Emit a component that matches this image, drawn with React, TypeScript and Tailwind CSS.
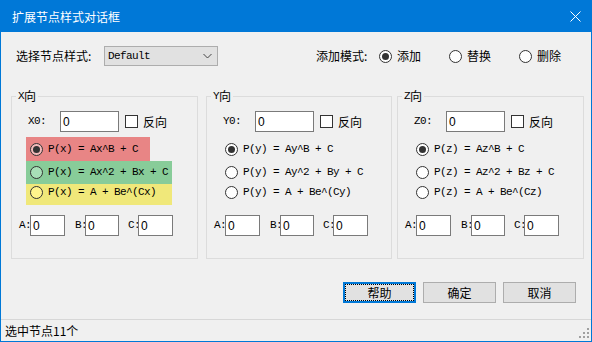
import React from "react";

function Radio({ checked, fill }: { checked?: boolean; fill?: string }) {
  return (
    <span
      className={`flex h-[13px] w-[13px] shrink-0 items-center justify-center rounded-full border border-[#333333] ${fill ?? "bg-white"}`}
    >
      {checked && <span className="h-[7px] w-[7px] rounded-full bg-[#333333]" />}
    </span>
  );
}

function TextBox({ w }: { w: string }) {
  return (
    <div
      className={`${w} flex h-[21px] items-center border border-[#7a7a7a] bg-white pl-[2px] font-['Liberation_Sans',sans-serif] text-[12px] leading-none text-black`}
    >
      0
    </div>
  );
}

type RowDef = { text: string; checked?: boolean; bg: string; fill: string; w: string; h: string; pt: string };

function Group({ axis, box, colored }: { axis: string; box: string; colored?: boolean }) {
  const a = axis.toLowerCase();
  const rows: RowDef[] = [
    {
      text: `P(${a}) = A${a}^B + C`,
      checked: true,
      bg: colored ? "bg-[#e88585]" : "",
      fill: colored ? "bg-[#f3b9b9]" : "bg-white",
      w: "w-[124px]",
      h: "h-[24px]",
      pt: "pt-[6px]",
    },
    {
      text: `P(${a}) = A${a}^2 + B${a} + C`,
      bg: colored ? "bg-[#88cc99]" : "",
      fill: colored ? "bg-[#a8dfb7]" : "bg-white",
      w: "w-[146px]",
      h: "h-[23px]",
      pt: "pt-[5px]",
    },
    {
      text: `P(${a}) = A + Be^(C${a})`,
      bg: colored ? "bg-[#f0e87a]" : "",
      fill: colored ? "bg-[#fff48c]" : "bg-white",
      w: "w-[146px]",
      h: "h-[21px]",
      pt: "pt-[2px]",
    },
  ];
  return (
    <div className={`relative h-[163px] shrink-0 border border-[#dcdcdc] ${box}`}>
      <div className="absolute left-[4px] top-[-9px] flex items-center bg-[#f0f0f0] px-[2px] text-[12px] leading-[16px] text-black">
        <span className="font-['Liberation_Mono',monospace] text-[11px] tracking-[-0.6px]">{axis}</span>
        <span className="font-['Noto_Sans_CJK_SC',sans-serif]">向</span>
      </div>
      <div className="mt-[14px] flex h-[21px] items-center pl-[16px]">
        <span className="w-[32px] font-['Liberation_Mono',monospace] text-[11px] tracking-[-0.6px] text-black">{axis}0:</span>
        <TextBox w="w-[59px]" />
        <span className="ml-[6px] h-[13px] w-[13px] border border-[#333333] bg-white" />
        <span className="ml-[5px] font-['Noto_Sans_CJK_SC',sans-serif] text-[12px] leading-[16px] text-black">反向</span>
      </div>
      <div className="mt-[5px] flex flex-col pl-[14px]">
        {rows.map((r) => (
          <div key={r.text} className={`flex items-start ${r.w} ${r.h} ${r.pt} ${r.bg} pl-[4px]`}>
            <Radio checked={r.checked} fill={r.fill} />
            <span className="ml-[5px] whitespace-pre font-['Liberation_Mono',monospace] text-[11px] leading-[13px] tracking-[-0.6px] text-black">
              {r.text}
            </span>
          </div>
        ))}
      </div>
      <div className="mt-[10px] flex h-[21px] items-center pl-[7px] font-['Liberation_Mono',monospace] text-[11px] tracking-[-0.6px] text-black">
        <span className="w-[11px]">A:</span>
        <TextBox w="w-[35px]" />
        <span className="ml-[10px] w-[10px]">B:</span>
        <TextBox w="w-[34px]" />
        <span className="ml-[9px] w-[10px]">C:</span>
        <TextBox w="w-[35px]" />
      </div>
    </div>
  );
}

function Btn({ label, focus }: { label: string; focus?: boolean }) {
  if (focus) {
    return (
      <div className="flex h-[21px] w-[73px] border-2 border-[#0078d7] bg-[#e1e1e1]">
        <div className="flex flex-1 items-center justify-center border border-dotted border-black font-['Noto_Sans_CJK_SC',sans-serif] text-[12px] leading-none text-black">
          {label}
        </div>
      </div>
    );
  }
  return (
    <div className="flex h-[21px] w-[73px] items-center justify-center border border-[#adadad] bg-[#e1e1e1] font-['Noto_Sans_CJK_SC',sans-serif] text-[12px] leading-none text-black">
      {label}
    </div>
  );
}

function ModeRadio({ label, checked }: { label: string; checked?: boolean }) {
  return (
    <div className="flex w-[70px] items-center">
      <Radio checked={checked} />
      <span className="ml-[5px]">{label}</span>
    </div>
  );
}

export default function App() {
  return (
    <div className="flex h-[342px] w-[592px] flex-col border border-[#0078d7] bg-[#f0f0f0] font-['Noto_Sans_CJK_SC',sans-serif] text-[12px] text-black">
      <div className="flex h-[31px] shrink-0 items-center justify-between bg-[#0078d7] pl-[11px] pr-[11px] text-white">
        <span className="leading-[16px]">扩展节点样式对话框</span>
        <svg width="11" height="11" viewBox="0 0 11 11" className="mr-[-1px]">
          <path d="M0.5 0.5 L10.5 10.5 M10.5 0.5 L0.5 10.5" stroke="white" strokeWidth="1" />
        </svg>
      </div>

      <div className="mt-[14px] flex h-[20px] shrink-0 items-center pl-[15px]">
        <span className="w-[88px] leading-[16px]">选择节点样式:</span>
        <div className="flex h-[20px] w-[114px] items-center justify-between border border-[#adadad] bg-[#e1e1e1] pl-[3px] pr-[5px]">
          <span className="font-['Liberation_Mono',monospace] text-[11px] tracking-[-0.6px]">Default</span>
          <svg width="9" height="6" viewBox="0 0 9 6">
            <path d="M0.5 1 L4.5 5 L8.5 1" stroke="#444" strokeWidth="1" fill="none" />
          </svg>
        </div>
        <div className="ml-[98px] flex items-center leading-[16px]">
          <span className="w-[63px]">添加模式:</span>
          <ModeRadio label="添加" checked />
          <ModeRadio label="替换" />
          <ModeRadio label="删除" />
        </div>
      </div>

      <div className="mt-[30px] flex shrink-0">
        <Group axis="X" box="ml-[10px] w-[187px]" colored />
        <Group axis="Y" box="ml-[8px] w-[186px]" />
        <Group axis="Z" box="ml-[5px] w-[187px]" />
      </div>

      <div className="mt-[23px] flex shrink-0 justify-end gap-[7px] pr-[15px]">
        <Btn label="帮助" focus />
        <Btn label="确定" />
        <Btn label="取消" />
      </div>

      <div className="flex-1" />

      <div className="relative flex h-[22px] shrink-0 items-center border-t border-[#d7d7d7] pl-[4px]">
        <span className="leading-[16px]">选中节点11个</span>
        <svg width="12" height="12" viewBox="0 0 12 12" className="absolute bottom-[2px] right-[1px]">
          <rect x="9" y="1" width="2" height="2" fill="#a0a0a0" />
          <rect x="5" y="5" width="2" height="2" fill="#a0a0a0" />
          <rect x="9" y="5" width="2" height="2" fill="#a0a0a0" />
          <rect x="1" y="9" width="2" height="2" fill="#a0a0a0" />
          <rect x="5" y="9" width="2" height="2" fill="#a0a0a0" />
          <rect x="9" y="9" width="2" height="2" fill="#a0a0a0" />
        </svg>
      </div>
    </div>
  );
}
